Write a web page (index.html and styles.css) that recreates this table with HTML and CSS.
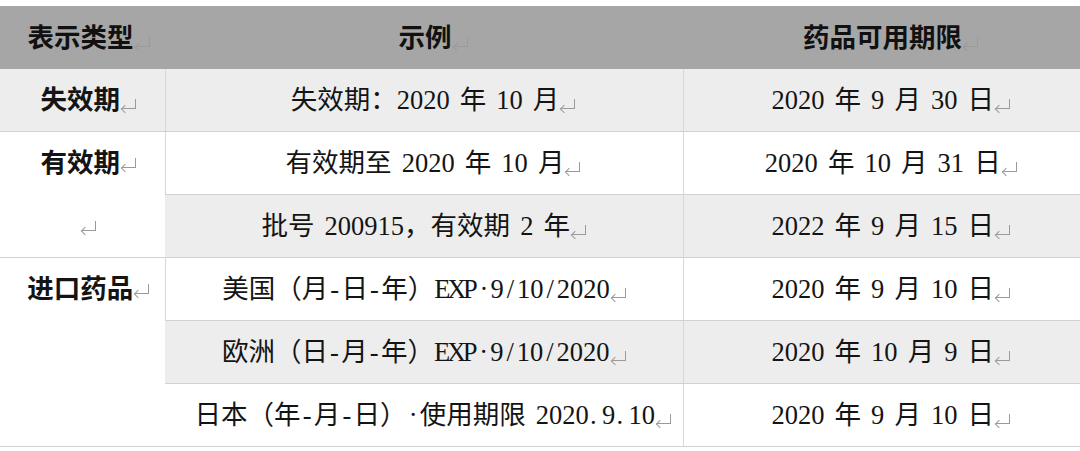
FILE: index.html
```html
<!DOCTYPE html>
<html lang="zh-CN">
<head>
<meta charset="utf-8">
<title>药品有效期表示类型</title>
<link rel="stylesheet" href="styles.css">
</head>
<body>
<table class="grid">
  <colgroup>
    <col class="c1">
    <col class="c2">
    <col class="c3">
  </colgroup>
  <thead>
    <tr class="head">
      <th>表示类型<span class="pm"></span></th>
      <th>示例<span class="pm"></span></th>
      <th>药品可用期限<span class="pm"></span></th>
    </tr>
  </thead>
  <tbody>
    <tr class="shade">
      <td class="kind">失效期<span class="pm"></span></td>
      <td>失效期：2020 年 10 月<span class="pm"></span></td>
      <td>2020 年 9 月 30 日<span class="pm"></span></td>
    </tr>
    <tr>
      <td class="kind merged" rowspan="2">
        <div class="line">有效期<span class="pm"></span></div>
        <div class="line"><span class="pm"></span></div>
      </td>
      <td>有效期至 2020 年 10 月<span class="pm"></span></td>
      <td>2020 年 10 月 31 日<span class="pm"></span></td>
    </tr>
    <tr class="shade">
      <td class="flush">批号 200915，有效期 2 年<span class="pm"></span></td>
      <td>2022 年 9 月 15 日<span class="pm"></span></td>
    </tr>
    <tr>
      <td class="kind merged" rowspan="3">
        <div class="line">进口药品<span class="pm"></span></div>
      </td>
      <td class="flush">美国（月<span class="hw">-</span>日<span class="hw">-</span>年）<span class="nar">EXP</span><span class="hw">·</span>9<span class="hw">/</span>10<span class="hw">/</span>2020<span class="pm"></span></td>
      <td>2020 年 9 月 10 日<span class="pm"></span></td>
    </tr>
    <tr class="shade">
      <td class="flush">欧洲（日<span class="hw">-</span>月<span class="hw">-</span>年）<span class="nar">EXP</span><span class="hw">·</span>9<span class="hw">/</span>10<span class="hw">/</span>2020<span class="pm"></span></td>
      <td>2020 年 10 月 9 日<span class="pm"></span></td>
    </tr>
    <tr class="last">
      <td>日本（年<span class="hw">-</span>月<span class="hw">-</span>日）<span class="hw">·</span>使用期限 2020<span class="hw l">.</span>9<span class="hw l">.</span>10<span class="pm"></span></td>
      <td>2020 年 9 月 10 日<span class="pm"></span></td>
    </tr>
  </tbody>
</table>
</body>
</html>
```

FILE: styles.css
```css
html, body {
  margin: 0;
  padding: 0;
  background: #ffffff;
}

body {
  padding-top: 6px;
  font-family: "Liberation Serif", "Noto Sans CJK SC", serif;
  color: #141414;
}

.grid {
  width: 1080px;
  table-layout: fixed;
  border-collapse: collapse;
  font-size: 26.5px;
  word-spacing: 0.13em;
}

.c1 { width: 165px; }
.c2 { width: 518px; }
.c3 { width: 397px; }

.grid th,
.grid td {
  height: 62px;
  padding: 0 0 0 18px;
  text-align: center;
  vertical-align: middle;
  white-space: nowrap;
  line-height: 30px;
}

.grid th:first-child,
.grid td.kind {
  padding-left: 12px;
}

.grid td.flush {
  padding-left: 0;
}

.head th {
  height: 63px;
  background: #a6a6a6;
  font-weight: bold;
  color: #111;
  border: none;
}

.grid tbody td {
  border-top: 1px solid #d2d2d2;
  border-bottom: 1px solid #d2d2d2;
  border-left: 1px solid #d8d8d8;
  font-weight: normal;
}

.grid tbody td:first-child {
  border-left: none;
}

.grid tbody tr:first-child td {
  border-top: none;
}

.shade td {
  background: #ededed;
}

.kind {
  font-weight: bold !important;
}

.merged {
  vertical-align: top !important;
  background: #ffffff;
}

.line {
  height: 62px;
  display: flex;
  align-items: center;
  justify-content: center;
}

.merged .line + .line {
  height: 63px;
}

.hw {
  display: inline-block;
  width: 0.5em;
  text-align: center;
}

.hw.l {
  text-align: left;
  text-indent: 0.05em;
}

.nar {
  letter-spacing: -0.12em;
  margin-right: 0.1em;
}

/* Word paragraph mark (return arrow) drawn with borders */
.pm {
  display: inline-block;
  position: relative;
  width: 13px;
  height: 9px;
  margin-left: 2px;
  border-right: 1.3px solid #9a9a9a;
  border-bottom: 1.3px solid #9a9a9a;
  vertical-align: 0;
}

.pm::before {
  content: "";
  position: absolute;
  left: 0;
  bottom: -4px;
  width: 5px;
  height: 5px;
  border-left: 1.3px solid #9a9a9a;
  border-bottom: 1.3px solid #9a9a9a;
  transform: rotate(45deg);
}
```
